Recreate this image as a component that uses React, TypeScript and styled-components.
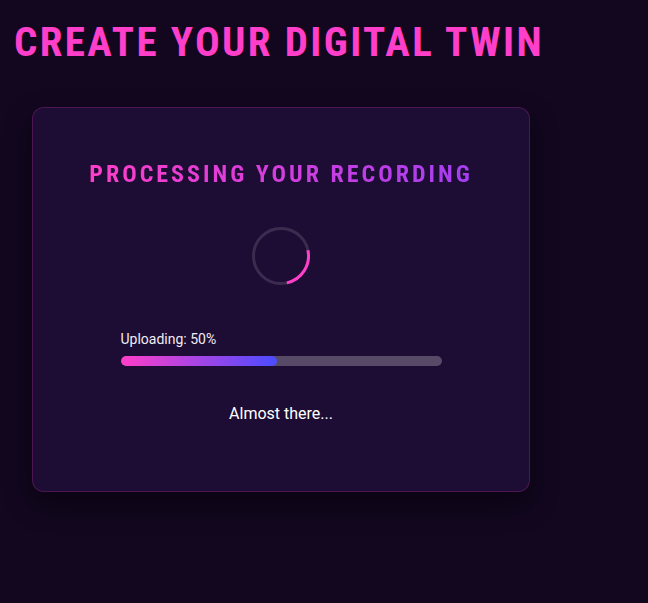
import React from "react";
import styled, { createGlobalStyle } from "styled-components";

const GlobalStyle = createGlobalStyle`
  html, body {
    margin: 0;
    padding: 0;
    background: #12071f;
    font-family: Roboto, "Noto Sans", sans-serif;
    color: #ffffff;
  }
  * {
    box-sizing: border-box;
  }
`;

const Page = styled.div`
  min-height: 603px;
  padding: 20px 0 0 0;
  background: #12071f;
`;

const Title = styled.h1`
  margin: 0 0 43px 14px;
  font-family: "Roboto Condensed", "Liberation Sans Narrow", "DejaVu Sans Condensed", Roboto, sans-serif;
  font-stretch: condensed;
  font-size: 41px;
  line-height: 44px;
  font-weight: 700;
  letter-spacing: 2.4px;
  color: #ff3ec9;
  text-transform: uppercase;
`;

const Card = styled.section`
  margin-left: 32px;
  width: 498px;
  height: 385px;
  padding: 52px 0 0;
  display: flex;
  flex-direction: column;
  align-items: center;
  background: #1d0c33;
  border: 1px solid rgba(255, 62, 201, 0.22);
  border-radius: 12px;
  box-shadow: 0 12px 28px rgba(0, 0, 0, 0.45);
`;

const Heading = styled.h2`
  margin: 0;
  font-family: "Roboto Condensed", "Liberation Sans Narrow", "DejaVu Sans Condensed", Roboto, sans-serif;
  font-stretch: condensed;
  font-size: 24px;
  line-height: 28px;
  font-weight: 700;
  letter-spacing: 3px;
  background: linear-gradient(90deg, #ff3ec9 0%, #a53ef2 100%);
  -webkit-background-clip: text;
  background-clip: text;
  color: transparent;
`;

const Spinner = styled.svg`
  margin-top: 39px;
  width: 58px;
  height: 58px;
  display: block;
`;

const Progress = styled.div`
  margin-top: 46px;
  width: 321px;
`;

const ProgressLabel = styled.div`
  font-size: 14px;
  line-height: 16px;
  color: #f1edf5;
  margin-bottom: 9px;
`;

const Track = styled.div`
  height: 10px;
  border-radius: 5px;
  background: #574a66;
  overflow: hidden;
`;

const Fill = styled.div`
  height: 100%;
  border-radius: 5px;
  background: linear-gradient(90deg, #ff3ec9 0%, #4b4cff 100%);
`;

const Status = styled.p`
  margin: 38px 0 0;
  font-size: 16px;
  line-height: 19px;
  color: #ffffff;
`;

export default function App() {
  const progress = 48.6;
  return (
    <>
      <GlobalStyle />
      <Page>
        <Title>Create your digital twin</Title>
        <Card>
          <Heading>PROCESSING YOUR RECORDING</Heading>
          <Spinner viewBox="0 0 58 58">
            <circle cx="29" cy="29" r="27.5" fill="none" stroke="#3b2c4f" strokeWidth="3" />
            <circle
              cx="29"
              cy="29"
              r="27.5"
              fill="none"
              stroke="#ff3ec9"
              strokeWidth="3"
              strokeDasharray="43 200"
              transform="rotate(-12 29 29)"
            />
          </Spinner>
          <Progress>
            <ProgressLabel>Uploading: 50%</ProgressLabel>
            <Track>
              <Fill style={{ width: `${progress}%` }} />
            </Track>
          </Progress>
          <Status>Almost there...</Status>
        </Card>
      </Page>
    </>
  );
}
